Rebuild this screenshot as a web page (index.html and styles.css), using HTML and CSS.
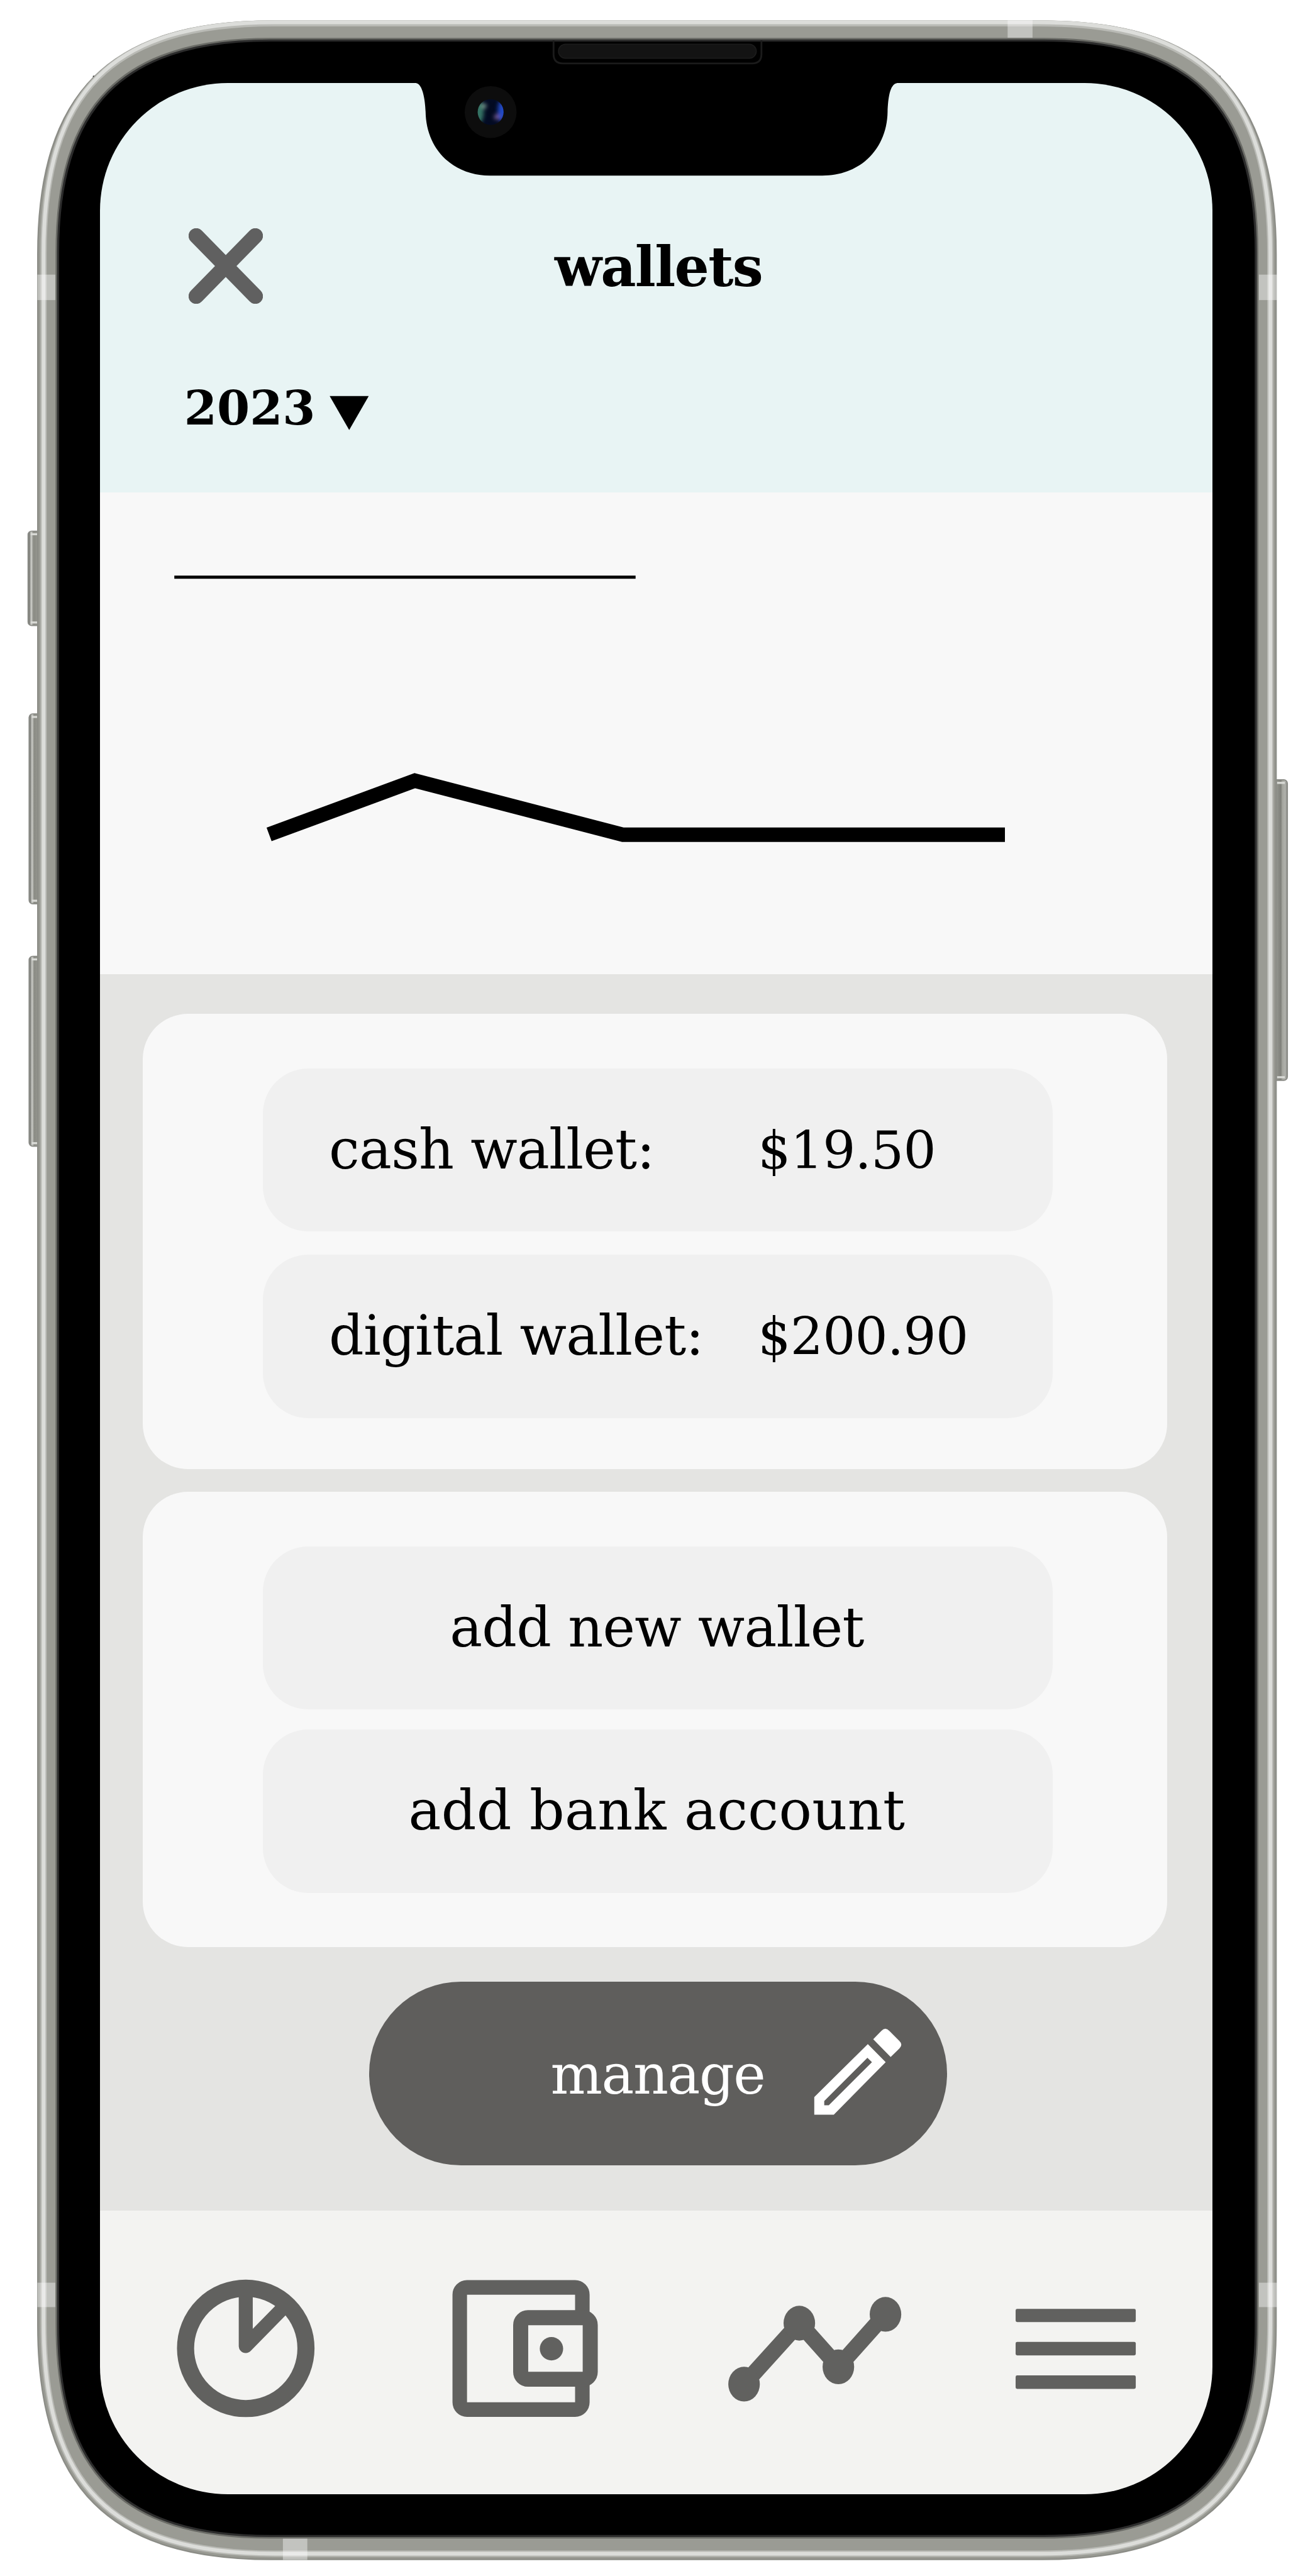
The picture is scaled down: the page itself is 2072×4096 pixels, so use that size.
FILE: index.html
```html
<!DOCTYPE html>
<html lang="en">
<head>
<meta charset="utf-8">
<title>wallets</title>
<link rel="stylesheet" href="styles.css">
</head>
<body>
<div class="device">
  <svg class="frame" viewBox="0 0 2510 4962" preserveAspectRatio="none" aria-hidden="true">
    <defs>
      <linearGradient id="btnL" x1="0" x2="1" y1="0" y2="0">
        <stop offset="0" stop-color="#7d7e79"/><stop offset=".12" stop-color="#8a8b86"/><stop offset=".2" stop-color="#cfd0cc"/><stop offset=".35" stop-color="#8a8b84"/><stop offset=".7" stop-color="#989992"/><stop offset="1" stop-color="#7f807a"/>
      </linearGradient>
      <linearGradient id="btnR" x1="1" x2="0" y1="0" y2="0">
        <stop offset="0" stop-color="#7d7e79"/><stop offset=".12" stop-color="#b0b1ac"/><stop offset=".3" stop-color="#a5a69f"/><stop offset=".4" stop-color="#7f807a"/><stop offset=".7" stop-color="#989992"/><stop offset="1" stop-color="#7f807a"/>
      </linearGradient>
    </defs>
    <!-- side buttons -->
    <g stroke="#8b8c87" stroke-width="2">
      <rect x="54" y="1023" width="30" height="182" rx="7" fill="url(#btnL)"/>
      <rect x="56" y="1375" width="28" height="366" rx="7" fill="url(#btnL)"/>
      <rect x="56" y="1842" width="28" height="366" rx="7" fill="url(#btnL)"/>
      <rect x="2448" y="1502" width="32" height="579" rx="7" fill="url(#btnR)"/>
    </g>
    <g fill="#d9dad6">
      <rect x="59" y="1027" width="14" height="4"/><rect x="59" y="1197" width="14" height="4"/>
      <rect x="61" y="1379" width="12" height="4"/><rect x="61" y="1733" width="12" height="4"/>
      <rect x="61" y="1846" width="12" height="4"/><rect x="61" y="2200" width="12" height="4"/>
      <rect x="2460" y="1506" width="15" height="4"/><rect x="2460" y="2073" width="15" height="4"/>
    </g>
    <g fill="#000">
      <rect x="179" y="146" width="4" height="4"/><rect x="2347" y="146" width="4" height="4"/>
      <rect x="179" y="4815" width="4" height="4"/><rect x="2347" y="4815" width="4" height="4"/>
    </g>
    <!-- metal band -->
    <path fill="#9a9b94" stroke="#8c8d87" stroke-width="3" d="M73 490C73 178 211 41 523 41H2008C2320 41 2458 178 2458 490V4480C2458 4792 2320 4930 2008 4930H523C211 4930 73 4792 73 4480Z"/>
    <path fill="none" stroke="#b9bab5" stroke-width="12" d="M84 488C84 175 215 45 529 45H2002C2316 45 2447 175 2447 488V4475C2447 4788 2316 4919 2002 4919H529C215 4919 84 4788 84 4475Z"/>
    <path fill="none" stroke="#dcddda" stroke-width="7" d="M84 488C84 175 215 43 529 43H2002C2316 43 2447 175 2447 488V4475C2447 4788 2316 4919 2002 4919H529C215 4919 84 4788 84 4475Z"/>
    <g fill="#fff" fill-opacity=".4">
      <rect x="72" y="529" width="35" height="49"/><rect x="2425" y="529" width="35" height="49"/>
      <rect x="72" y="4397" width="35" height="47"/><rect x="2425" y="4397" width="35" height="47"/>
      <rect x="1941" y="39" width="48" height="34"/><rect x="545" y="4889" width="47" height="42"/>
    </g>
    <!-- glass -->
    <path fill="#000" stroke="#6a6b66" stroke-width="6" d="M110 485C110 203 235 76 520 76H2011C2296 76 2421 203 2421 485V4478C2421 4762 2296 4887 2011 4887H520C235 4887 110 4762 110 4478Z"/>
    <path fill="#000" stroke="#2c2c2c" stroke-width="4" d="M112 485C112 205 237 78 520 78H2011C2294 78 2419 205 2419 485V4478C2419 4760 2294 4885 2011 4885H520C237 4885 112 4760 112 4478Z"/>
  </svg>

  <main class="screen">
    <header class="top">
      <div class="top__row">
        <svg class="close" viewBox="0 0 118 120"><path d="M12 12 106 108M106 12 12 108"/></svg>
        <h1 class="title">wallets</h1>
      </div>
      <div class="year"><span>2023</span><span class="year__arrow">▼</span></div>
    </header>

    <section class="chart">
      <svg viewBox="159.3 783 1769.1 765.6" preserveAspectRatio="none">
        <path class="chart__axis" d="M277.5 917.8H1011"/>
        <path class="chart__line" d="M428.2 1326.8 660 1241.3 991 1327.3H1598.3"/>
      </svg>
    </section>

    <section class="body">
      <div class="card">
        <div class="pill pill--row"><span class="pill__name">cash wallet:</span><span class="pill__sum">$19.50</span></div>
        <div class="pill pill--row"><span class="pill__name">digital wallet:</span><span class="pill__sum">$200.90</span></div>
      </div>
      <div class="card card--actions">
        <div class="pill pill--action">add new wallet</div>
        <div class="pill pill--action pill--bank">add bank account</div>
      </div>
      <div class="manage">
        <span class="manage__text">manage</span>
        <svg class="manage__icon" viewBox="1567 3903 170 169">
          <path fill-rule="evenodd" d="M1568 4036.8 1671.2 3934.7 1705.6 3969.5 1605.6 4070.8H1568ZM1587.2 4044.5V4052.6H1596L1679.2 3969.5 1670.4 3961Z"/>
          <path d="M1681.6 3925.5 1697 3909.5Q1704.8 3901 1713 3909.5L1732 3928.6Q1739.5 3935.5 1732 3943.3L1715.2 3959.5Z"/>
        </svg>
      </div>
    </section>

    <nav class="nav">
      <svg class="nav__pie" viewBox="341 4380 266 288">
        <circle cx="474" cy="4523" r="116" fill="none" stroke-width="33"/>
        <path fill="none" stroke-width="27" stroke-linejoin="round" d="M474 4418V4518.500L548 4443"/>
      </svg>
      <svg class="nav__wallet" viewBox="871 4380 281 288">
        <rect x="885.6" y="4405.600" width="236.200" height="235.400" rx="14" fill="none" stroke-width="28"/>
        <rect class="nav__pocket" x="1003" y="4464" width="134" height="118.500" rx="14" stroke-width="29"/>
        <circle class="nav__solid" cx="1062.300" cy="4523.800" r="22.500"/>
      </svg>
      <svg class="nav__trend" viewBox="1403 4380 334 288">
        <path fill="none" stroke-width="31" d="M1433.500 4591.800 1540 4474.300 1615.200 4558.600 1705.600 4457.300"/>
        <g class="nav__solid">
          <ellipse cx="1433.500" cy="4592" rx="30.400" ry="33.500"/><ellipse cx="1540" cy="4474.500" rx="30.400" ry="33.500"/>
          <ellipse cx="1615.200" cy="4558.600" rx="30.400" ry="33.500"/><ellipse cx="1706" cy="4457.500" rx="30.400" ry="33.500"/>
        </g>
      </svg>
      <svg class="nav__menu" viewBox="1957 4380 232 288">
        <g class="nav__solid">
          <rect x="1957" y="4447" width="231.500" height="25.500" rx="3"/><rect x="1957" y="4510.500" width="231.500" height="26" rx="3"/><rect x="1957" y="4575" width="231.500" height="26" rx="3"/>
        </g>
      </svg>
    </nav>
  </main>

  <svg class="notch" viewBox="790 70 950 275" aria-hidden="true">
    <defs>
      <radialGradient id="lens"><stop offset="0" stop-color="#020a20"/><stop offset="1" stop-color="#030b24"/></radialGradient>
      <clipPath id="lensClip"><circle cx="945.300" cy="215.600" r="25"/></clipPath>
      <filter id="soft" x="-50%" y="-50%" width="200%" height="200%"><feGaussianBlur stdDeviation="4"/></filter>
    </defs>
    <path d="M802 158V160C814 162 819 190 820 215C821 285 870 338 945 338H1584C1659 338 1709 285 1710 215C1711 190 1714 162 1728 160V158Z"/>
    <circle cx="945.300" cy="215.600" r="50" fill="#0d0d0d"/>
    <g clip-path="url(#lensClip)">
      <circle cx="945.300" cy="215.600" r="25" fill="url(#lens)"/>
      <g filter="url(#soft)">
        <ellipse cx="923" cy="215" rx="9" ry="22" fill="#347465"/>
        <ellipse cx="968" cy="213" rx="9" ry="22" fill="#2149c4"/>
        <circle cx="933" cy="204" r="4" fill="#8fb3a6"/>
        <circle cx="957" cy="225" r="5" fill="#7a5f9a"/>
      </g>
    </g>
    <path fill="none" stroke="#1b1b1b" stroke-width="3.500" d="M1066.500 78V104Q1066.500 122 1084.500 122H1449Q1467 122 1467 104V78"/>
    <rect x="1076" y="85" width="381" height="27" rx="13.500" fill="#131313" stroke="#1b1b1b" stroke-width="2"/>
  </svg>
</div>
</body>
</html>
```
FILE: styles.css
```css
* { box-sizing: border-box; }

body {
  margin: 0;
  background: #fff;
  color: #000;
  font-family: "DejaVu Serif", serif;
}

svg { display: block; }

.device {
  position: relative;
  width: 2072px;
  height: 4096px;
  overflow: hidden;
  padding: 132px 143.6px 130.3px 159.3px;
}

.frame {
  position: absolute;
  left: 0;
  top: 0;
  width: 2072px;
  height: 4096px;
}

.notch {
  position: absolute;
  left: 652.1px;
  top: 57.8px;
  width: 784.2px;
  height: 227px;
}

.screen {
  position: relative;
  display: flex;
  flex-direction: column;
  height: 3833.7px;
  border-radius: 203px;
  overflow: hidden;
}

/* header */
.top {
  height: 651px;
  padding: 231.3px 0 0 133.500px;
  background: #e8f4f4;
}

.top__row {
  display: flex;
  align-items: center;
  height: 119.5px;
  padding-left: 7.2px;
}

.close {
  width: 118px;
  height: 120px;
  fill: none;
  stroke: #606060;
  stroke-width: 24.5px;
  stroke-linecap: round;
}

.title {
  margin: 3px 0 0 464px;
  font-size: 87px;
  line-height: 100px;
  font-weight: bold;
  letter-spacing: -1.7px;
}

.year {
  display: flex;
  align-items: baseline;
  gap: 22.5px;
  margin-top: 120px;
  font-size: 75px;
  line-height: 88px;
  font-weight: bold;
}

.year__arrow {
  font-size: 81.4px;
  transform: scaleY(.866);
  transform-origin: 0 72px;
}

/* chart */
.chart {
  height: 765.6px;
  background: #f8f8f8;
}

.chart svg { width: 100%; height: 100%; }
.chart path { fill: none; stroke: #000; }
.chart .chart__axis { stroke-width: 5px; }
.chart .chart__line { stroke-width: 23px; }

/* wallets */
.body {
  display: flex;
  flex-direction: column;
  height: 1966.9px;
  padding: 63.4px 72.6px 0 68px;
  background: #e4e4e2;
}

.card {
  display: flex;
  flex-direction: column;
  gap: 36.7px;
  height: 723.700px;
  padding: 87px 182.2px 0 191px;
  border-radius: 72px;
  background: #f8f8f8;
}

.card--actions {
  gap: 32px;
  height: 724.5px;
  margin-top: 36.3px;
  padding-top: 86.7px;
}

.pill {
  display: flex;
  height: 259.5px;
  line-height: 259px;
  border-radius: 72px;
  background: #f0f0f0;
  font-size: 87px;
  letter-spacing: -.75px;
  white-space: nowrap;
}

.pill--row {
  align-items: baseline;
  padding-left: 104.8px;
}

.pill__name { width: 682.1px; }

.pill__sum {
  font-size: 82px;
  letter-spacing: -.7px;
}

.pill--action {
  justify-content: center;
  padding-right: 3px;
}

.pill--bank { letter-spacing: .4px; }

.manage {
  display: flex;
  align-items: center;
  width: 919.1px;
  height: 291.7px;
  margin: 54.5px 0 0 359.4px;
  padding-left: 288.7px;
  border-radius: 146px;
  background: #5f5e5c;
  color: #fff;
}

.manage__text {
  width: 419px;
  padding-top: 4px;
  font-size: 87px;
  line-height: 110px;
  letter-spacing: -1.4px;
}

.manage__icon {
  width: 140.3px;
  height: 139.500px;
  margin-top: -7px;
  fill: #fff;
}

/* bottom navigation */
.nav {
  display: flex;
  flex: 1;
  padding: 100.2px 0 0 122.2px;
  background: #f3f3f1;
  stroke: #61615f;
}

.nav svg { height: 237.7px; flex: none; }
.nav .nav__pie { width: 219.6px; }
.nav .nav__wallet { width: 232px; margin-left: 217.9px; }
.nav .nav__trend { width: 275.7px; margin-left: 207.2px; }
.nav .nav__menu { width: 191.5px; margin-left: 181.6px; }
.nav__pocket { fill: #f3f3f1; }
.nav__solid { fill: #61615f; stroke: none; }
```
